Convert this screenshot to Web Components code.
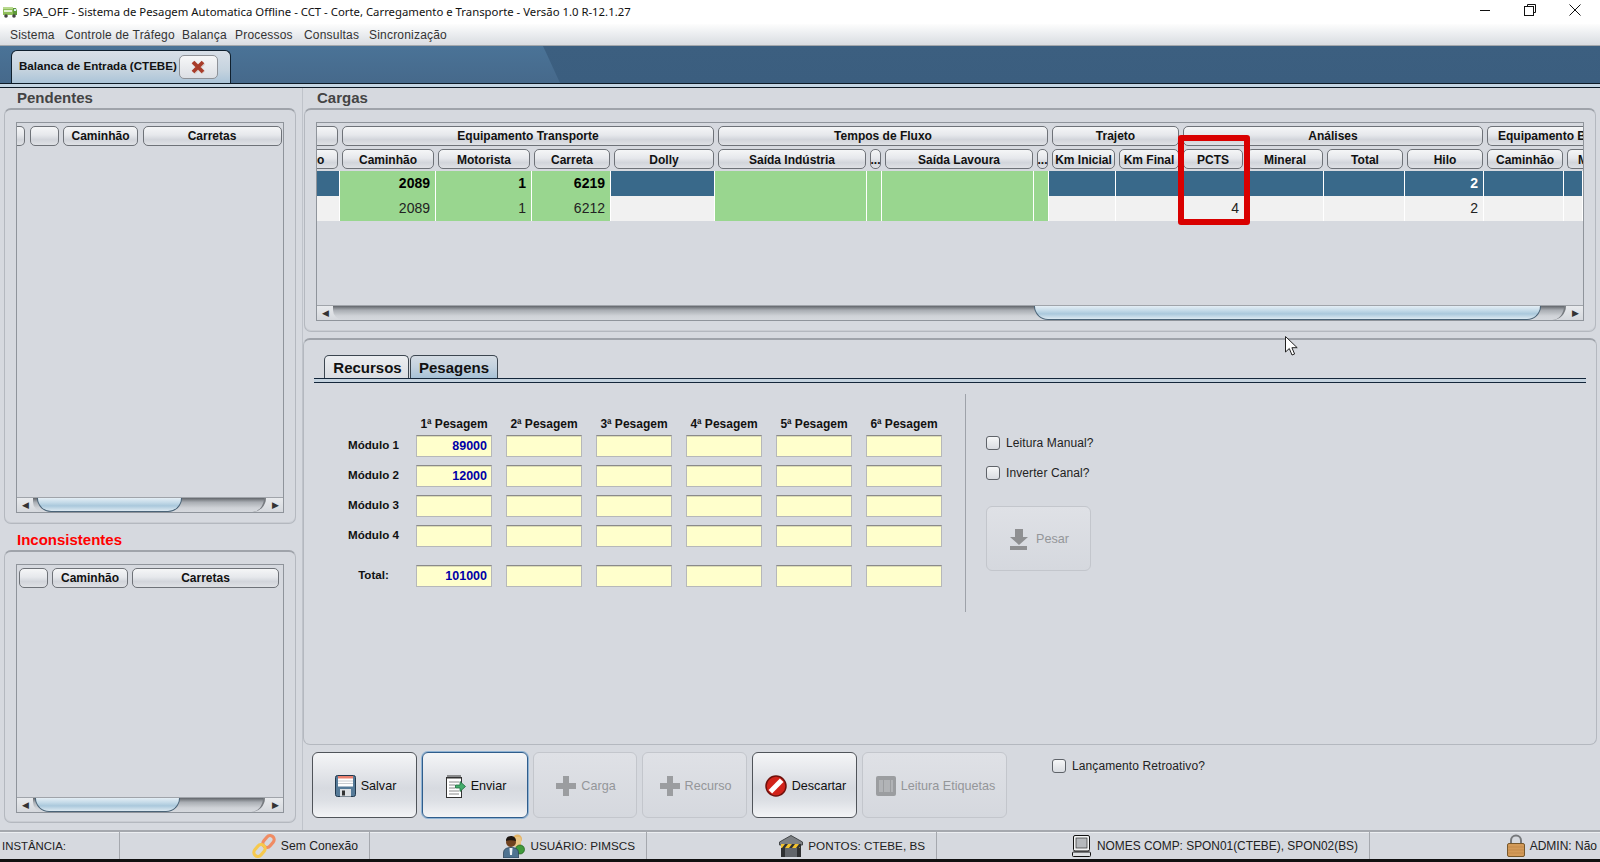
<!DOCTYPE html>
<html lang="pt-BR">
<head>
<meta charset="utf-8">
<title>SPA_OFF</title>
<style>
  html, body { margin: 0; padding: 0; background: #d6d9df; }
  body { font-family: "Liberation Sans", Arial, sans-serif; font-size: 12px; color: #111; overflow: hidden; }
</style>
</head>
<body>
<spa-window>
  <title-bar>SPA_OFF - Sistema de Pesagem Automatica Offline - CCT - Corte, Carregamento e Transporte - Versão 1.0 R-12.1.27</title-bar>
  <menu-bar>
    <span>Sistema</span><span>Controle de Tráfego</span><span>Balança</span><span>Processos</span><span>Consultas</span><span>Sincronização</span>
  </menu-bar>
  <tab-strip>Balanca de Entrada (CTEBE)</tab-strip>
  <main-area>
    <div slot="left">
      <titled-panel label="Pendentes" style="height:436px;--label-h:20px">
        <small-table cols="8,29,75,139" gap="4.5" cut="1" thumb-left="4" thumb-width="145" track-end="233"></small-table>
      </titled-panel>
      <titled-panel label="Inconsistentes" style="height:299px;--label-h:26px;--label-color:#ff0000;--pb:9px">
        <small-table cols="29,76,147" gap="4" thumb-left="2" thumb-width="145" track-end="232"></small-table>
      </titled-panel>
    </div>
    <div slot="right">
      <titled-panel label="Cargas" style="height:244px;--label-h:20px">
        <cargas-table></cargas-table>
      </titled-panel>
      <work-panel>
        <span slot="tab-a">Recursos</span>
        <span slot="tab-b">Pesagens</span>
        <pesagens-form></pesagens-form>
      </work-panel>
      <action-row>
        <action-btn w="105"><app-icon slot="icon" name="floppy"></app-icon>Salvar</action-btn>
        <action-btn w="106" focused><app-icon slot="icon" name="note"></app-icon>Enviar</action-btn>
        <action-btn w="104" disabled><app-icon slot="icon" name="plus"></app-icon>Carga</action-btn>
        <action-btn w="105" disabled><app-icon slot="icon" name="plus"></app-icon>Recurso</action-btn>
        <action-btn w="105"><app-icon slot="icon" name="noentry"></app-icon>Descartar</action-btn>
        <action-btn w="145" disabled><app-icon slot="icon" name="barcode"></app-icon>Leitura Etiquetas</action-btn>
        <check-box style="margin:7px 0 0 40px">Lançamento Retroativo?</check-box>
      </action-row>
    </div>
  </main-area>
  <status-bar>
    <status-cell w="120" left style="font-size:11.4px">INSTÂNCIA:</status-cell>
    <status-cell w="250" style="font-size:12.2px"><app-icon slot="icon" name="chain"></app-icon>Sem Conexão</status-cell>
    <status-cell w="277" style="font-size:11.7px"><app-icon slot="icon" name="user"></app-icon>USUÁRIO: PIMSCS</status-cell>
    <status-cell w="290" style="font-size:11.7px"><app-icon slot="icon" name="house"></app-icon>PONTOS: CTEBE, BS</status-cell>
    <status-cell w="433" style="font-size:11.9px;gap:6px"><app-icon slot="icon" name="monitor"></app-icon>NOMES COMP: SPON01(CTEBE), SPON02(BS)</status-cell>
    <status-cell w="229" last><app-icon slot="icon" name="lock"></app-icon>ADMIN: Não</status-cell>
  </status-bar>
</spa-window>

<script>
const ICONS = {
  bus: `<svg width="14" height="12" viewBox="0 0 14 12"><rect x="0" y="1" width="10" height="8" fill="#8fbf5a"/><rect x="0" y="1" width="10" height="2" fill="#b9d98f"/><path d="M10 2h3l1 3v4h-4z" fill="#5f9a3a"/><rect x="11" y="3" width="2" height="2" fill="#d8ecf4"/><rect x="1" y="4" width="8" height="2" fill="#e4efd6"/><circle cx="3" cy="10" r="1.8" fill="#444"/><circle cx="11" cy="10" r="1.8" fill="#444"/></svg>`,
  close: `<svg width="14" height="14" viewBox="0 0 14 14"><path d="M2 2l10 10M12 2L2 12" stroke="#d8cfcc" stroke-width="4.4" transform="translate(.6 .8)"/><path d="M2 2l10 10M12 2L2 12" stroke="#a83c2a" stroke-width="3.8"/></svg>`,
  floppy: `<svg width="21" height="22" viewBox="0 0 21 22"><rect x=".5" y=".5" width="20" height="21" rx="2" fill="#557a98" stroke="#22384c"/><rect x="3" y="1" width="15" height="10.5" fill="#fff"/><rect x="3" y="1" width="15" height="2.5" fill="#e9806f"/><path d="M3 6h15M3 8.5h15" stroke="#c9ccd0"/><rect x="5" y="14" width="11" height="7.5" fill="#dcdfe2"/><rect x="7" y="15.5" width="3" height="5" fill="#333"/></svg>`,
  note: `<svg width="20" height="24" viewBox="0 0 20 24"><rect x=".5" y="3.5" width="15" height="20" fill="#fff" stroke="#333"/><path d="M2 1v4M4 1v4M6 1v4M8 1v4M10 1v4M12 1v4M14 1v4" stroke="#333"/><path d="M3 8h10M3 11h6M3 14h6M3 17h10M3 20h10" stroke="#8a8a8a"/><path d="M9.5 11h4.5V7.5l5.5 5-5.5 5V14H9.5z" fill="#45ad6c" stroke="#1e6b3e" stroke-width=".8"/></svg>`,
  plus: `<svg width="20" height="20" viewBox="0 0 20 20"><path d="M7 0h6v7h7v6h-7v7H7v-7H0V7h7z" fill="#9b9da0"/></svg>`,
  noentry: `<svg width="22" height="22" viewBox="0 0 22 22"><circle cx="11" cy="11" r="10" fill="#d2231a" stroke="#6e100b" stroke-width="1.5"/><rect x="3" y="8.5" width="16" height="5" fill="#fff" transform="rotate(-45 11 11)"/></svg>`,
  barcode: `<svg width="20" height="20" viewBox="0 0 20 20"><rect width="20" height="20" rx="2" fill="#9b9da0"/><path d="M4 4v12M6 4v12M9 4v12M11 4v12M13 4v12M16 4v12" stroke="#c8cacd"/></svg>`,
  chain: `<svg width="24" height="24" viewBox="0 0 24 24"><rect x="10" y="3.5" width="13" height="8" rx="4" fill="none" stroke="#f08c64" stroke-width="3.2" transform="rotate(-50 16.5 7.5)"/><rect x="1" y="12.5" width="13" height="8" rx="4" fill="none" stroke="#f6c94e" stroke-width="3.2" transform="rotate(-50 7.5 16.5)"/></svg>`,
  user: `<svg width="22" height="24" viewBox="0 0 22 24"><circle cx="14.5" cy="5" r="4.5" fill="#e6b566"/><rect x="11" y="3" width="7" height="10" rx="2" fill="#e9c584"/><circle cx="17" cy="15.5" r="4.5" fill="#3f9a3c" stroke="#1f5e1d" stroke-width=".7"/><circle cx="8" cy="8" r="5" fill="#70421f"/><path d="M3 7c0-4 3-5 5-5s5 1 5 5c-3-1-7-1-10 0z" fill="#1d1510"/><path d="M.5 24v-5c0-4 3-5.500 7.500-5.500s7.500 1.500 7.500 5.500v5z" fill="#4f7391" stroke="#22384c" stroke-width=".7"/><path d="M6.500 14h3l-.5 7h-2z" fill="#eef2f5"/></svg>`,
  house: `<svg width="24" height="22" viewBox="0 0 24 22"><path d="M12 .5L23.500 7v3H.5V7z" fill="#7d8084" stroke="#44474a"/><rect x="2" y="9" width="20" height="13" fill="#2f3133"/><path d="M2 9h4l-3 4H2zM9 9h4l-3 4H6zM16 9h4l-3 4h-4zM21 12v1h-1z" fill="#f2c230"/><rect x="6" y="13" width="12" height="9" fill="#62666b"/></svg>`,
  monitor: `<svg width="19" height="22" viewBox="0 0 19 22"><rect x="1.500" y=".5" width="16" height="15.500" rx="1.500" fill="#f2f3f4" stroke="#111"/><rect x="4" y="3" width="11" height="10" fill="#b5b8bc" stroke="#333" stroke-width=".7"/><rect x=".5" y="17" width="18" height="4.500" rx="1" fill="#dcdfe2" stroke="#111"/></svg>`,
  lock: `<svg width="18" height="23" viewBox="0 0 18 23"><path d="M4 10V6.500a5 5 0 0 1 10 0V10" fill="none" stroke="#77797c" stroke-width="2"/><rect x=".5" y="9.500" width="17" height="13" rx="1.500" fill="#d39a58" stroke="#77582c"/><path d="M1 13h16M1 16h16M1 19h16" stroke="#bd8545" stroke-width=".7"/></svg>`,
  down: `<svg width="18" height="21" viewBox="0 0 18 21"><path d="M5 0h8v8h5l-9 8-9-8h5z" fill="#8f9092"/><rect y="17" width="17" height="4" fill="#8f9092"/></svg>`,
  min: `<svg width="12" height="12" viewBox="0 0 12 12"><path d="M1 6.500h10" stroke="#111"/></svg>`,
  restore: `<svg width="12" height="12" viewBox="0 0 12 12"><path d="M3.500 2.500v-2h8v8h-2" fill="none" stroke="#111"/><rect x=".5" y="2.500" width="9" height="9" fill="none" stroke="#111"/></svg>`,
  x: `<svg width="12" height="12" viewBox="0 0 12 12"><path d="M.5.500l11 11M11.500.500l-11 11" stroke="#111"/></svg>`,
  cursor: `<svg width="13" height="20" viewBox="0 0 13 20"><path d="M.5.500v15.500l3.800-3.500 2.700 6.500 2.600-1-2.700-6.300h5.300z" fill="#fff" stroke="#222"/></svg>`
};

class AppIcon extends HTMLElement {
  constructor() {
    super();
    this.attachShadow({ mode: 'open' });
  }
  connectedCallback() {
    this.shadowRoot.innerHTML = `
      <style>:host{display:inline-flex;flex:none;line-height:0}</style>
      ${ICONS[this.getAttribute('name')]}
    `;
  }
}

class SpaWindow extends HTMLElement {
  constructor() {
    super();
    this.attachShadow({ mode: 'open' });
    this.shadowRoot.innerHTML = `
      <style>
        :host{display:flex;flex-direction:column;width:1600px;height:862px;position:relative;background:#d6d9df;overflow:hidden}
        .cursor{position:absolute;left:1285px;top:336px}
      </style>
      <slot></slot>
      <app-icon class="cursor" name="cursor"></app-icon>
    `;
  }
}

class TitleBar extends HTMLElement {
  constructor() {
    super();
    this.attachShadow({ mode: 'open' });
    this.shadowRoot.innerHTML = `
      <style>
        :host{display:flex;align-items:center;height:24px;flex:none;background:#fff;padding-left:3px;font:11.35px "Noto Sans","Open Sans",sans-serif;color:#111}
        .txt{margin-left:6px;white-space:nowrap;margin-top:-1px}
        .ctl{margin-left:auto;display:flex;margin-top:-4px;padding-right:19px;gap:33px}
      </style>
      <app-icon name="bus"></app-icon>
      <span class="txt"><slot></slot></span>
      <div class="ctl"><app-icon name="min"></app-icon><app-icon name="restore"></app-icon><app-icon name="x"></app-icon></div>
    `;
  }
}

class MenuBar extends HTMLElement {
  constructor() {
    super();
    this.attachShadow({ mode: 'open' });
    this.shadowRoot.innerHTML = `
      <style>
        :host{display:grid;grid-template-columns:55px 117px 53px 69px 65px auto;align-items:center;height:22px;flex:none;box-sizing:border-box;padding-left:10px;
          background:linear-gradient(#fdfdfd,#eef0f2 40%,#d9dce1);border-bottom:1px solid #a3a7ac;font-size:12px;color:#333;letter-spacing:.2px;white-space:nowrap}
      </style>
      <slot></slot>
    `;
  }
}

class TabStrip extends HTMLElement {
  constructor() {
    super();
    this.attachShadow({ mode: 'open' });
    this.shadowRoot.innerHTML = `
      <style>
        :host{display:block;height:42px;flex:none;box-sizing:border-box;border-bottom:1px solid #0d1a26}
        .bar{height:38px;background:linear-gradient(#3c5f80,#3b5e7f);position:relative;box-sizing:border-box;border-bottom:1px solid #0d1a26;padding:4px 0 0 11px;display:flex}
        .bar::before{content:"";position:absolute;inset:0 auto 0 0;width:565px;background:linear-gradient(#4a7397,#46698b);clip-path:polygon(0 0,543px 0,560px 100%,0 100%)}
        .line{height:3px;background:#c4d5e3}
        .tab{position:relative;box-sizing:border-box;width:220px;height:33px;border:1px solid #10202e;border-bottom:0;border-radius:6px 6px 0 0;
          background:linear-gradient(#d8dfe7,#c5d3df 60%,#abc4d8);display:flex;align-items:center;padding:0 0 0 7px;font-weight:bold;font-size:11.6px;color:#111;white-space:nowrap}
        .close{box-sizing:border-box;width:39px;height:24px;margin-left:2px;border:1px solid #8e9298;border-radius:5px;background:linear-gradient(#f6f7f8,#dcdfe4);display:flex;align-items:center;justify-content:center}
        .t{margin-top:-3px}
      </style>
      <div class="bar"><div class="tab"><span class="t"><slot></slot></span><span class="close"><app-icon name="close"></app-icon></span></div></div>
      <div class="line"></div>
    `;
  }
}

class MainArea extends HTMLElement {
  constructor() {
    super();
    this.attachShadow({ mode: 'open' });
    this.shadowRoot.innerHTML = `
      <style>
        :host{display:flex;height:742px;flex:none;padding-left:4px}
        ::slotted([slot=left]){width:292px;flex:none}
        ::slotted([slot=right]){width:1292px;flex:none;display:flex;flex-direction:column}
        .div{width:1px;margin:0 1px 0 6px;background:#bfc3ca}
      </style>
      <slot name="left"></slot><div class="div"></div><slot name="right"></slot>
    `;
  }
}

class TitledPanel extends HTMLElement {
  constructor() {
    super();
    this.attachShadow({ mode: 'open' });
  }
  connectedCallback() {
    this.shadowRoot.innerHTML = `
      <style>
        :host{display:flex;flex-direction:column;box-sizing:border-box}
        .lbl{height:var(--label-h,20px);flex:none;display:flex;align-items:flex-end;padding:0 0 1px 13px;box-sizing:border-box;font-weight:bold;font-size:15px;line-height:18px;color:var(--label-color,#444)}
        .box{flex:1;min-height:0;display:flex;box-sizing:border-box;padding:12px 11px var(--pb,10px);border:1px solid #b4b8bf;border-top:2px solid #9fa3aa;border-radius:7px;box-shadow:inset 0 -1px 0 #c9ccd2}
      </style>
      <div class="lbl">${this.getAttribute('label')}</div>
      <div class="box"><slot></slot></div>
    `;
  }
}

class ColHead extends HTMLElement {
  constructor() {
    super();
    this.attachShadow({ mode: 'open' });
    this.shadowRoot.innerHTML = `
      <style>
        :host{display:flex;align-items:center;justify-content:center;box-sizing:border-box;height:20px;min-width:0;overflow:hidden;white-space:nowrap;
          border:1px solid #6e7278;border-bottom-width:1.500px;border-radius:5px;background:linear-gradient(#f5f6f7,#e6e8ec 45%,#d2d5db 70%,#dfe1e5);font-weight:bold;font-size:12px;color:#111}
        :host([cut-left]){border-left:0;border-radius:0 5px 5px 0;justify-content:flex-start}
        :host([cut-right]){border-right:0;border-radius:5px 0 0 5px;justify-content:flex-start;padding-left:10px}
      </style>
      <slot></slot>
    `;
  }
}

class HScroll extends HTMLElement {
  constructor() {
    super();
    this.attachShadow({ mode: 'open' });
  }
  connectedCallback() {
    const left = this.getAttribute('thumb-left');
    const width = this.getAttribute('thumb-width');
    const end = this.getAttribute('track-end');
    this.shadowRoot.innerHTML = `
      <style>
        :host{display:flex;height:15px;flex:none;background:linear-gradient(#e8eaed,#d5d8dd);box-sizing:border-box;border-top:1px solid #a0a4aa}
        .btn{flex:none;width:16px;display:flex;align-items:center;justify-content:center;color:#333;font-size:9px}
        .track{flex:none;box-sizing:border-box;width:${end}px;height:14px;display:flex;border-radius:0 0 14px 10px;background:linear-gradient(#62666b,#a9adb3 30%,#cfd2d7 70%,#d6d9de);border-right:2px solid #777b80}
        .thumb{box-sizing:border-box;margin-left:${left}px;width:${width}px;height:14px;border:1px solid #4b6478;border-top:0;border-radius:0 0 14px 14px;background:linear-gradient(#e4eef5,#c4dae8 35%,#aac8dc 60%,#dce9f1)}
        .sp{flex:1}
      </style>
      <div class="btn">◀</div><div class="track"><div class="thumb"></div></div><div class="sp"></div><div class="btn">▶</div>
    `;
  }
}

class SmallTable extends HTMLElement {
  constructor() {
    super();
    this.attachShadow({ mode: 'open' });
  }
  connectedCallback() {
    const cols = this.getAttribute('cols').split(',');
    const titles = cols.length === 4 ? ['', '', 'Caminhão', 'Carretas'] : ['', 'Caminhão', 'Carretas'];
    const cut = this.hasAttribute('cut');
    const heads = cols.map((w, i) => `<col-head style="width:${w}px;flex:none" ${cut && i === 0 ? 'cut-left' : ''}>${titles[i]}</col-head>`).join('');
    this.shadowRoot.innerHTML = `
      <style>
        :host{display:flex;flex-direction:column;flex:1;box-sizing:border-box;border:1px solid #8f949b;min-width:0}
        .head{display:flex;gap:${this.getAttribute('gap')}px;padding:3px 0 0 ${cut ? 0 : 2}px}
        .body{flex:1}
      </style>
      <div class="head">${heads}</div>
      <div class="body"></div>
      <h-scroll thumb-left="${this.getAttribute('thumb-left')}" thumb-width="${this.getAttribute('thumb-width')}" track-end="${this.getAttribute('track-end')}"></h-scroll>
    `;
  }
}

class CargasTable extends HTMLElement {
  constructor() {
    super();
    this.attachShadow({ mode: 'open' });
  }
  connectedCallback() {
    const headCols = '25px 96px 96px 80px 104px 152px 15px 152px 15px 67px 64px 64px 80px 80px 80px 80px 20px';
    const rowCols = '23px 96px 96px 79px 104px 152px 15px 152px 15px 67px 65px 64px 79px 81px 79px 80px 19px';
    const groups = [[1, ''], [4, 'Equipamento Transporte'], [4, 'Tempos de Fluxo'], [2, 'Trajeto'], [4, 'Análises'], [2, 'Equipamento Bi']];
    const heads = ['o', 'Caminhão', 'Motorista', 'Carreta', 'Dolly', 'Saída Indústria', '...', 'Saída Lavoura', '...', 'Km Inicial', 'Km Final', 'PCTS', 'Mineral', 'Total', 'Hilo', 'Caminhão', 'M'];
    const green = [1, 2, 3, 5, 6, 7, 8];
    const rows = [
      { sel: true, vals: { 1: '2089', 2: '1', 3: '6219', 14: '2' } },
      { sel: false, vals: { 1: '2089', 2: '1', 3: '6212', 11: '4', 14: '2' } }
    ];
    const attrs = (i, last) => i === 0 ? 'cut-left' : (i === last ? 'cut-right' : '');

    const groupHtml = groups.map((g, i) => `<col-head style="grid-column:span ${g[0]};margin-right:4px" ${attrs(i, groups.length - 1)}>${g[1]}</col-head>`).join('');
    const headHtml = heads.map((h, i) => `<col-head style="margin-right:4px;padding-top:1px" ${attrs(i, heads.length - 1)}>${h}</col-head>`).join('');
    const rowHtml = rows.map(r => `<div class="row ${r.sel ? 'sel' : ''}">` + heads.map((h, i) =>
      `<div class="cell ${green.includes(i) ? 'green' : ''}">${r.vals[i] || ''}</div>`).join('') + `</div>`).join('');

    this.shadowRoot.innerHTML = `
      <style>
        :host{display:flex;flex-direction:column;flex:1;box-sizing:border-box;border:1px solid #8f949b;position:relative;min-width:0;overflow:hidden}
        .grid{display:grid;grid-template-columns:${headCols};width:1270px;padding-top:3px}
        .g2{margin-bottom:2px}
        .row{display:grid;grid-template-columns:${rowCols};height:25px;background:#f1f1f1;font-size:14px;color:#222}
        .cell{display:flex;align-items:center;justify-content:flex-end;padding:0 5px 2px 0;border-right:1px solid #fff;box-sizing:border-box;min-width:0}
        .sel{background:#39698a;color:#fff;font-weight:bold}
        .green{background:#99d68f;color:#222}
        .sel .green{color:#000}
        .fill{flex:1}
        .mark{position:absolute;left:861px;top:12px;width:72px;height:90px;box-sizing:border-box;border:6px solid #d90000;border-radius:3px}
      </style>
      <div class="grid">${groupHtml}</div>
      <div class="grid g2">${headHtml}</div>
      ${rowHtml}
      <div class="fill"></div>
      <h-scroll thumb-left="701" thumb-width="507" track-end="1233"></h-scroll>
      <div class="mark"></div>
    `;
  }
}

class WorkPanel extends HTMLElement {
  constructor() {
    super();
    this.attachShadow({ mode: 'open' });
    this.shadowRoot.innerHTML = `
      <style>
        :host{display:flex;flex-direction:column;box-sizing:border-box;height:407px;margin:6px -1px 0;padding:15px 10px 0;border:1px solid #b4b8bf;border-top:2px solid #9fa3aa;border-radius:7px;flex:none}
        .tabs{display:flex;padding-left:10px;height:23px;align-items:flex-end}
        .tab{box-sizing:border-box;height:23px;display:flex;align-items:center;justify-content:center;border:1px solid #3c4650;border-bottom:0;border-radius:5px 5px 0 0;font-weight:bold;font-size:15px;color:#111}
        .a{width:85px;padding-left:2px;background:linear-gradient(#eceef1,#dadde2)}
        .b{width:88px;margin-left:1px;background:linear-gradient(#d5dce4,#c3d2df 50%,#a8c2d7)}
        .rule{height:3px;box-sizing:content-box;border-top:1px solid #14263a;border-bottom:1px solid #14263a;background:#c5d3df}
      </style>
      <div class="tabs"><div class="tab a"><slot name="tab-a"></slot></div><div class="tab b"><slot name="tab-b"></slot></div></div>
      <div class="rule"></div>
      <slot></slot>
    `;
  }
}

class PesagensForm extends HTMLElement {
  constructor() {
    super();
    this.attachShadow({ mode: 'open' });
  }
  connectedCallback() {
    const ord = ['1ª', '2ª', '3ª', '4ª', '5ª', '6ª'];
    const data = [['Módulo 1', '89000'], ['Módulo 2', '12000'], ['Módulo 3', ''], ['Módulo 4', ''], ['Total:', '101000']];
    const line = (label, val, extra) => `
      <div class="lab ${extra}">${label}</div>
      <div class="fld ${extra}">${val}</div>
      ${`<div class="fld ${extra}"></div>`.repeat(5)}`;
    this.shadowRoot.innerHTML = `
      <style>
        :host{display:flex;align-items:flex-start}
        .grid{display:grid;grid-template-columns:57px repeat(6,76px);column-gap:14px;row-gap:8px;margin:32px 0 0 31px;align-items:start}
        .hd{font-weight:bold;font-size:12px;text-align:center;height:12px;line-height:18px;color:#111;white-space:nowrap}
        .lab{font-weight:bold;font-size:11.6px;line-height:19px;text-align:center;white-space:nowrap}
        .fld{box-sizing:border-box;height:22px;background:#ffffcc;border:1px solid #b6b8ba;border-top:1px solid #8a8a8a;box-shadow:inset 0 1px 0 #ddddb4;color:#0000a8;font-weight:bold;font-size:12.500px;line-height:21px;text-align:right;padding-right:4px}
        .tot{margin-top:10px}
        .sep{width:1px;height:218px;background:#9ea2a9;margin:11px 0 0 23px;flex:none}
        .side{display:flex;flex-direction:column;margin:53px 0 0 20px;align-items:flex-start}
        .side check-box + check-box{margin-top:16px}
        .pesar{margin-top:26px;gap:8px}
      </style>
      <div class="grid">
        <div></div>${ord.map(o => `<div class="hd">${o} Pesagem</div>`).join('')}
        ${data.map((d, i) => line(d[0], d[1], i === 4 ? 'tot' : '')).join('')}
      </div>
      <div class="sep"></div>
      <div class="side">
        <check-box>Leitura Manual?</check-box>
        <check-box>Inverter Canal?</check-box>
        <action-btn class="pesar" w="105" h="65" disabled><app-icon slot="icon" name="down"></app-icon>Pesar</action-btn>
      </div>
    `;
  }
}

class CheckBox extends HTMLElement {
  constructor() {
    super();
    this.attachShadow({ mode: 'open' });
    this.shadowRoot.innerHTML = `
      <style>
        :host{display:flex;align-items:center;gap:6px;height:14px;font-size:12px;color:#222;white-space:nowrap;letter-spacing:.1px}
        .b{box-sizing:border-box;width:14px;height:14px;border:1px solid #5f6369;border-bottom-width:1.500px;border-radius:3px;background:linear-gradient(#f6f7f8,#d9dce1)}
      </style>
      <span class="b"></span><slot></slot>
    `;
  }
}

class ActionRow extends HTMLElement {
  constructor() {
    super();
    this.attachShadow({ mode: 'open' });
    this.shadowRoot.innerHTML = `
      <style>:host{display:flex;align-items:flex-start;gap:5px;padding:7px 0 0 8px}</style>
      <slot></slot>
    `;
  }
}

class ActionBtn extends HTMLElement {
  constructor() {
    super();
    this.attachShadow({ mode: 'open' });
  }
  connectedCallback() {
    this.shadowRoot.innerHTML = `
      <style>
        :host{display:flex;align-items:center;justify-content:center;gap:5px;box-sizing:border-box;flex:none;padding:1px 0 0 2px;
          width:${this.getAttribute('w')}px;height:${this.getAttribute('h') || 66}px;
          border:1px solid #50545a;border-radius:6px;background:linear-gradient(#f4f5f7,#d7dae0 55%,#dde0e5 75%,#f3f4f6);font-size:12.600px;color:#111;white-space:nowrap}
        :host([focused]){border:1px solid #2f5d8c;box-shadow:0 0 0 1px #8fb3d4}
        :host([disabled]){border-color:#c3c6cc;color:#949699;background:linear-gradient(#dfe1e6,#d5d8de)}
      </style>
      <slot name="icon"></slot><slot></slot>
    `;
  }
}

class StatusBar extends HTMLElement {
  constructor() {
    super();
    this.attachShadow({ mode: 'open' });
    this.shadowRoot.innerHTML = `
      <style>
        :host{display:flex;height:32px;flex:none;box-sizing:border-box;border-top:2px solid #a5a8ae;border-bottom:3px solid #111;box-shadow:inset 0 1px 0 #eceef1;background:#d6d9df}
      </style>
      <slot></slot>
    `;
  }
}

class StatusCell extends HTMLElement {
  constructor() {
    super();
    this.attachShadow({ mode: 'open' });
  }
  connectedCallback() {
    this.shadowRoot.innerHTML = `
      <style>
        :host{display:flex;align-items:center;justify-content:flex-end;gap:5px;box-sizing:border-box;flex:none;width:${this.getAttribute('w')}px;padding-right:11px;border-right:1px solid #a5a8ae;font-size:12px;color:#222;white-space:nowrap}
        :host([left]){justify-content:flex-start;padding-left:2px}
        :host([last]){padding-right:2px;border-right:0}
      </style>
      <slot name="icon"></slot><slot></slot>
    `;
  }
}

customElements.define('app-icon', AppIcon);
customElements.define('spa-window', SpaWindow);
customElements.define('title-bar', TitleBar);
customElements.define('menu-bar', MenuBar);
customElements.define('tab-strip', TabStrip);
customElements.define('main-area', MainArea);
customElements.define('titled-panel', TitledPanel);
customElements.define('col-head', ColHead);
customElements.define('h-scroll', HScroll);
customElements.define('small-table', SmallTable);
customElements.define('cargas-table', CargasTable);
customElements.define('work-panel', WorkPanel);
customElements.define('pesagens-form', PesagensForm);
customElements.define('check-box', CheckBox);
customElements.define('action-row', ActionRow);
customElements.define('action-btn', ActionBtn);
customElements.define('status-bar', StatusBar);
customElements.define('status-cell', StatusCell);
</script>
</body>
</html>
